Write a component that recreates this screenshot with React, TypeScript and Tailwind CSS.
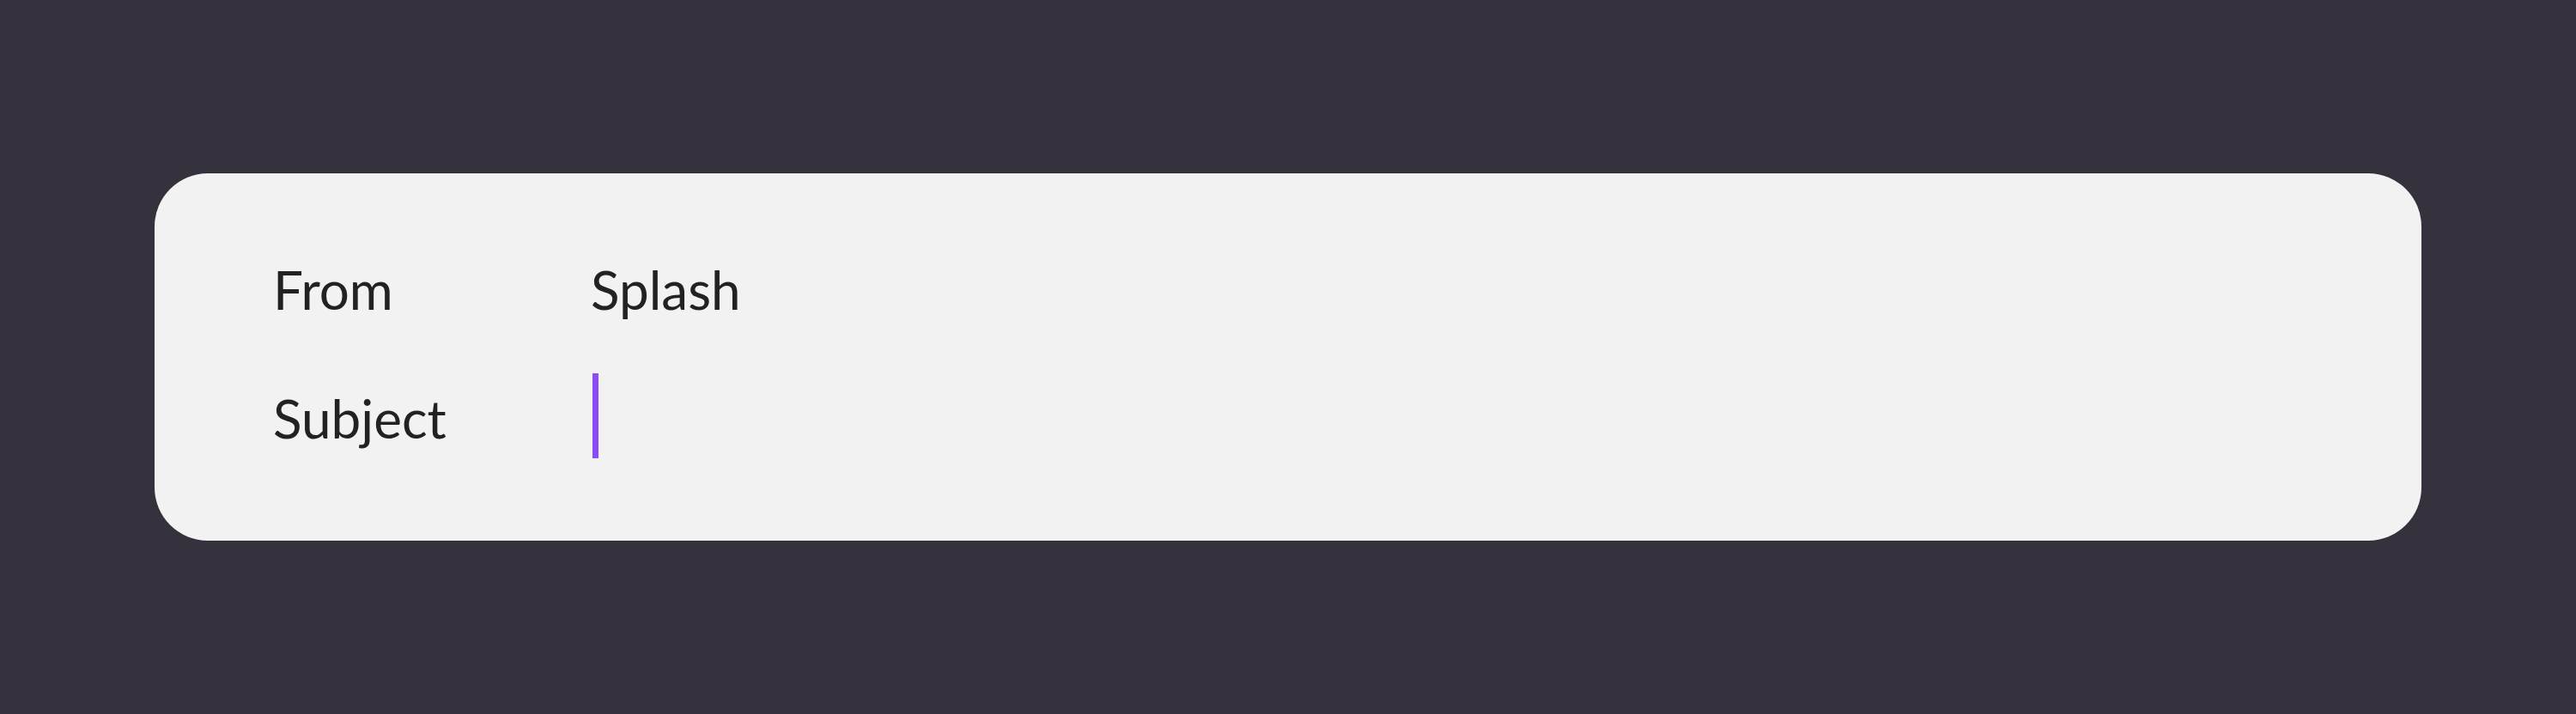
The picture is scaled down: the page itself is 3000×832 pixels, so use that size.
import React from "react";

export default function App() {
  return (
    <div className="w-[3000px] h-[832px] bg-[#35313d] pt-[202px] px-[180px]" style={{ fontFamily: "Lato, 'Noto Sans', sans-serif" }}>
      <div className="w-[2640px] h-[428px] bg-[#f2f2f2] rounded-[62px] pl-[138px] pt-[83px] flex flex-col gap-[51px] text-[#222222] text-[62px]">
        <div className="flex items-start h-[99px] leading-[105px]">
          <div className="w-[370px]">From</div>
          <div>Splash</div>
        </div>
        <div className="flex items-start h-[99px] leading-[105px]">
          <div className="w-[372px]">Subject</div>
          <div className="w-[7px] h-[99px] bg-[#8b4cf7]" />
        </div>
      </div>
    </div>
  );
}
